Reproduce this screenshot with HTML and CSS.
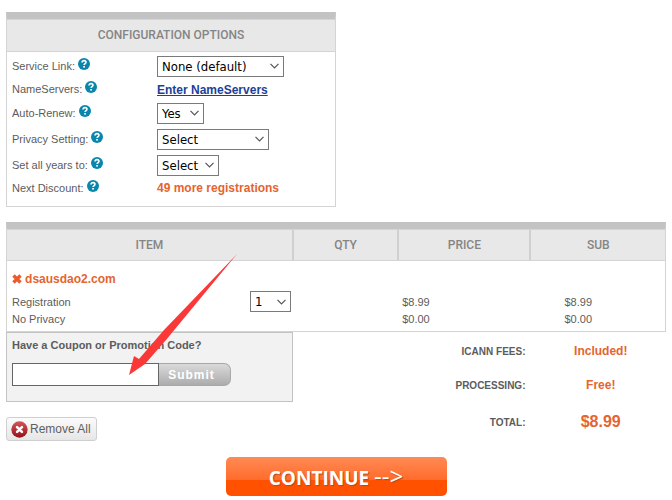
FILE: index.html
```html
<!DOCTYPE html>
<html lang="en">
<head>
    <meta charset="UTF-8">
    <meta name="viewport" content="width=device-width, initial-scale=1.0">
    <title>Shopping Cart</title>
    <link rel="stylesheet" href="styles.css">
</head>
<body>
    <svg class="sprite" aria-hidden="true">
        <symbol id="help" viewBox="0 0 12 12">
            <circle cx="6" cy="6" r="6" fill="#0a86ad"/>
            <path d="M4 4.6C4 3.2 4.9 2.6 6 2.6s2 .6 2 1.7c0 1.3-1.9 1.3-1.9 2.7" fill="none" stroke="#fff" stroke-width="1.6"/>
            <rect x="5.2" y="8" width="1.7" height="1.6" fill="#fff"/>
        </symbol>
    </svg>

    <div class="page">
        <section class="config">
            <h2 class="config-title">CONFIGURATION OPTIONS</h2>
            <div class="options">
                <label for="serviceLink">Service Link: <svg class="help"><use href="#help"/></svg></label>
                <div><select id="serviceLink" class="w-link"><option>None (default)</option></select></div>
                <span>NameServers: <svg class="help"><use href="#help"/></svg></span>
                <div><a class="ns-link" href="#">Enter NameServers</a></div>
                <label for="autoRenew">Auto-Renew: <svg class="help"><use href="#help"/></svg></label>
                <div><select id="autoRenew" class="w-renew"><option>Yes</option><option>No</option></select></div>
                <label for="privacy">Privacy Setting: <svg class="help"><use href="#help"/></svg></label>
                <div><select id="privacy" class="w-privacy"><option>Select</option></select></div>
                <label for="years">Set all years to: <svg class="help"><use href="#help"/></svg></label>
                <div><select id="years" class="w-years"><option>Select</option></select></div>
                <span>Next Discount: <svg class="help"><use href="#help"/></svg></span>
                <div class="discount">49 more registrations</div>
            </div>
        </section>

        <table class="cart">
            <thead>
                <tr>
                    <th class="col-item">ITEM</th>
                    <th class="col-qty">QTY</th>
                    <th class="col-price">PRICE</th>
                    <th class="col-sub">SUB</th>
                </tr>
            </thead>
            <tbody>
                <tr class="domain-row">
                    <td colspan="4">
                        <svg class="cross" viewBox="0 0 10 10"><path d="M1.5 1.5l7 7M8.5 1.5l-7 7" stroke="#ea5b2d" stroke-width="3.4"/></svg>
                        <span class="domain">dsausdao2.com</span>
                    </td>
                </tr>
                <tr>
                    <td>
                        <div class="reg">
                            <label for="qty">Registration</label>
                            <select id="qty" class="w-qty"><option>1</option><option>2</option></select>
                        </div>
                    </td>
                    <td></td>
                    <td>$8.99</td>
                    <td class="sub">$8.99</td>
                </tr>
                <tr class="privacy-row">
                    <td>No Privacy</td>
                    <td></td>
                    <td>$0.00</td>
                    <td class="sub">$0.00</td>
                </tr>
            </tbody>
        </table>

        <div class="summary">
            <div class="left">
                <form class="coupon">
                    <label for="code">Have a Coupon or Promotion Code?</label>
                    <div class="coupon-row">
                        <input type="text" id="code">
                        <button type="button" class="submit">Submit</button>
                    </div>
                </form>
                <button type="button" class="remove">
                    <svg viewBox="0 0 16 16">
                        <defs>
                            <linearGradient id="red" x1="0" y1="0" x2="0" y2="1">
                                <stop offset="0" stop-color="#d2565a"/>
                                <stop offset="1" stop-color="#96101a"/>
                            </linearGradient>
                        </defs>
                        <circle cx="8" cy="8" r="7.7" fill="url(#red)"/>
                        <path d="M5.7 5.7l4.6 4.6M10.3 5.7l-4.6 4.6" stroke="#fff" stroke-width="2.4" stroke-linecap="round"/>
                    </svg>
                    Remove All
                </button>
            </div>
            <dl class="totals">
                <dt>ICANN FEES:</dt>
                <dd>Included!</dd>
                <dt>PROCESSING:</dt>
                <dd>Free!</dd>
                <dt>TOTAL:</dt>
                <dd class="grand">$8.99</dd>
            </dl>
        </div>

        <button type="button" class="continue">CONTINUE <span class="arrow">--&gt;</span></button>

        <svg class="pointer" viewBox="0 0 108 122" aria-hidden="true">
            <path d="M108 0L37 86l-21 24L0 121l5-19 5 3L35 76z" fill="#fb3838"/>
        </svg>
    </div>
</body>
</html>
```
FILE: styles.css
```css
body {
    margin: 0;
    background: #fff;
    color: #5c5c5c;
    font-family: "Liberation Sans", Arial, sans-serif;
    font-size: 11px;
}
.sprite {
    position: absolute;
    width: 0;
    height: 0;
}
.page {
    position: relative;
    padding: 12px 6px 4px;
}
select {
    appearance: none;
    box-sizing: border-box;
    height: 21px;
    padding: 0 4px;
    border: 1px solid #7a7a7a;
    border-radius: 0;
    background: #fff url("data:image/svg+xml,%3Csvg xmlns='http://www.w3.org/2000/svg' width='9' height='6'%3E%3Cpath d='M.5 .8l4 4 4-4' fill='none' stroke='%23555' stroke-width='1.2'/%3E%3C/svg%3E") no-repeat right 4px center;
    color: #000;
    font-family: "DejaVu Sans Condensed", Tahoma, sans-serif;
    font-size: 13px;
    vertical-align: middle;
}
.w-link { width: 127px; }
.w-renew { width: 47px; }
.w-privacy { width: 112px; }
.w-years { width: 62px; }
.w-qty { width: 41px; }

/* configuration box */
.config {
    box-sizing: border-box;
    width: 50%;
    border: 1px solid #d4d4d4;
    border-top: 7px solid #c3c3c3;
}
.config-title {
    margin: 0;
    border-top: 1px solid #d4d4d4;
    border-bottom: 1px solid #d4d4d4;
    background: #e8e8e8;
    color: #858585;
    font: 500 12px/31px Roboto, sans-serif;
    text-align: center;
}
.options {
    display: grid;
    grid-template-columns: 145px 1fr;
    grid-template-rows: 26px 21px 26px 26px 26px 20px;
    align-items: center;
    padding: 1px 5px 8px;
}
.options label,
.options span {
    padding-bottom: 3px;
}
.help {
    width: 12px;
    height: 12px;
    vertical-align: 0;
}
.ns-link {
    color: #213f99;
    font-size: 12px;
    font-weight: bold;
}
.discount {
    color: #e5642f;
    font-size: 12px;
    font-weight: bold;
}

/* cart table */
.cart {
    width: 100%;
    margin-top: 15px;
    border: 1px solid #d4d4d4;
    border-top: 7px solid #c3c3c3;
    border-spacing: 0;
    border-collapse: separate;
    table-layout: fixed;
}
.cart th {
    height: 30px;
    padding: 0;
    border-top: 1px solid #d4d4d4;
    border-bottom: 1px solid #d4d4d4;
    border-left: 2px solid #d0d0d0;
    background: #e8e8e8;
    color: #858585;
    font: 500 12px Roboto, sans-serif;
}
.cart th.col-item {
    border-left: 0;
}
.col-item { width: 43.3%; }
.col-qty { width: 15.7%; }
.col-price { width: 19.8%; }
.cart td {
    padding: 0 0 0 5px;
}
.domain-row td {
    height: 25px;
    vertical-align: bottom;
    padding-bottom: 5px;
}
.domain {
    color: #e5642f;
    font-size: 12px;
    font-weight: bold;
}
.cross {
    width: 10px;
    height: 10px;
    vertical-align: -1px;
}
.reg {
    display: flex;
    align-items: center;
    justify-content: space-between;
    padding-right: 1px;
}
.cart td.sub {
    padding-left: 35px;
}
.privacy-row td {
    height: 16px;
    padding-top: 1px;
    padding-bottom: 2px;
    vertical-align: top;
}

/* coupon and totals */
.summary {
    display: flex;
}
.left {
    width: 43.5%;
}
.coupon {
    box-sizing: border-box;
    height: 70px;
    padding: 6px 5px;
    border: 1px solid #c3c3c3;
    background: #f2f2f2;
    font-weight: bold;
}
.coupon-row {
    display: flex;
    margin-top: 12px;
}
.coupon input {
    box-sizing: border-box;
    width: 147px;
    height: 23px;
    border: 1px solid #666;
    background: #fff;
}
.submit {
    width: 72px;
    height: 23px;
    padding: 0 6px 0 0;
    border: 1px solid #a8a8a8;
    border-left: 0;
    border-radius: 0 7px 7px 0;
    background: linear-gradient(#dadada, #acacac);
    color: #fff;
    font: bold 12px "Liberation Sans", Arial, sans-serif;
    letter-spacing: 1px;
}
.remove {
    display: flex;
    align-items: center;
    gap: 2px;
    height: 24px;
    margin-top: 15px;
    padding: 0 5px 0 4px;
    border: 1px solid #cfcfcf;
    border-radius: 3px;
    background: linear-gradient(#fbfbfb, #e6e6e6);
    color: #606060;
    font: 12px "Liberation Sans", Arial, sans-serif;
}
.remove svg {
    width: 17px;
    height: 17px;
}
.totals {
    flex: 1;
    display: grid;
    grid-template-columns: 1fr 35%;
    grid-template-rows: 34px 34px 40px;
    align-items: center;
    margin: 2px 0 0;
    font-weight: bold;
}
.totals dt {
    padding-right: 10px;
    font-size: 10px;
    text-align: right;
}
.totals dd {
    margin: 0;
    color: #e5642f;
    font-size: 12px;
    text-align: center;
}
.totals .grand {
    font-size: 16px;
}
.continue {
    display: block;
    width: 221px;
    height: 39px;
    margin: 15px auto 0;
    padding: 0;
    border: 0;
    border-radius: 5px;
    background: linear-gradient(#ff8a55, #ff6c2c 58%, #ff5100 60%, #ff5100);
    color: #fff;
    font: bold 19px/24px "Open Sans", sans-serif;
    text-shadow: 1px 1px 1px #b8481a;
}
.arrow {
    font-size: 24px;
    font-weight: 500;
}

/* red pointer towards the coupon box */
.pointer {
    position: absolute;
    left: 129px;
    top: 254px;
    width: 108px;
    height: 122px;
}
```
